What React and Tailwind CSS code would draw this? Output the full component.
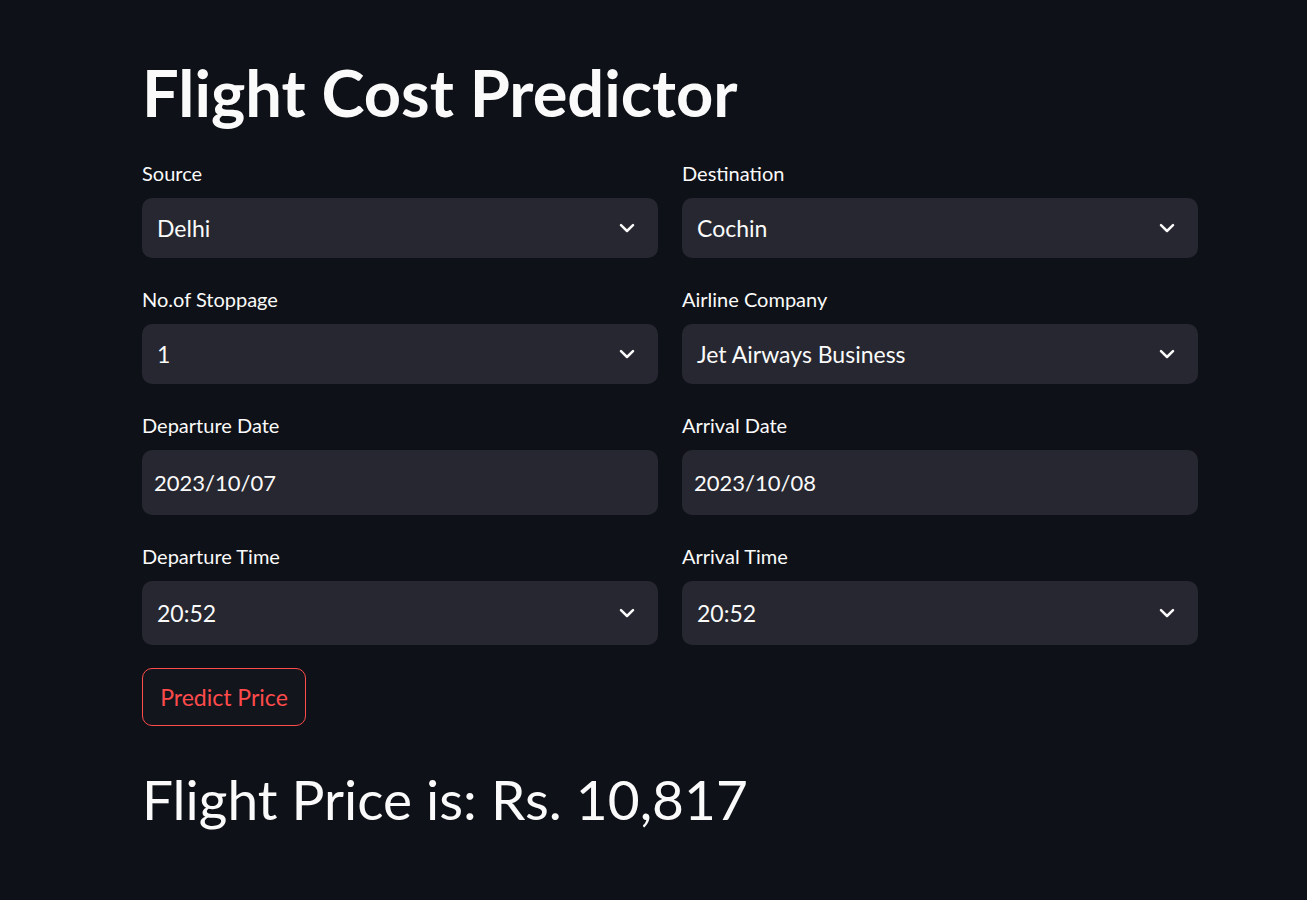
import React from "react";

function Chevron() {
  return (
    <svg width="16" height="16" viewBox="0 0 16 16" fill="none" className="shrink-0">
      <path d="M2 5.2l6 5.8 6-5.8" stroke="#fafafa" strokeWidth="2.5" strokeLinecap="round" strokeLinejoin="round" />
    </svg>
  );
}

function SelectField({ label, value, h = "h-[60px]" }) {
  return (
    <div className="flex flex-col">
      <div className="text-[20px] leading-[23px] text-[#fafafa]">{label}</div>
      <div className={`mt-[13px] ${h} rounded-[10px] bg-[#262730] flex items-center justify-between pl-[15px] pr-[23px]`}>
        <span className="text-[23px] text-[#fafafa]">{value}</span>
        <Chevron />
      </div>
    </div>
  );
}

function DateField({ label, value }) {
  return (
    <div className="flex flex-col">
      <div className="text-[20px] leading-[23px] text-[#fafafa]">{label}</div>
      <div className="mt-[13px] h-[65px] rounded-[10px] bg-[#262730] flex items-center pl-[12px]">
        <span className="text-[22px] text-[#fafafa]">{value}</span>
      </div>
    </div>
  );
}

export default function App() {
  return (
    <div className="min-h-screen bg-[#0e1117] text-[#fafafa]" style={{ fontFamily: "Lato, 'Noto Sans', sans-serif" }}>
      <div className="w-[1056px] ml-[142px] pt-[53px]">
        <h1 className="text-[65px] leading-[1.2] font-bold">Flight Cost Predictor</h1>
        <div className="mt-[31px] grid grid-cols-2 gap-x-6 gap-y-[30px]">
          <SelectField label="Source" value="Delhi" />
          <SelectField label="Destination" value="Cochin" />
          <SelectField label="No.of Stoppage" value="1" />
          <SelectField label="Airline Company" value="Jet Airways Business" />
          <DateField label="Departure Date" value="2023/10/07" />
          <DateField label="Arrival Date" value="2023/10/08" />
          <SelectField label="Departure Time" value="20:52" h="h-[64px]" />
          <SelectField label="Arrival Time" value="20:52" h="h-[64px]" />
        </div>
        <button className="mt-[23px] h-[58px] w-[164px] rounded-[10px] border border-[#ff4b4b] bg-[#12151c] text-[#ff4b4b] text-[23px] flex items-center justify-center">
          Predict Price
        </button>
        <div className="mt-[40px] text-[55px] leading-[1.2]">Flight Price is: Rs. 10,817</div>
      </div>
    </div>
  );
}
